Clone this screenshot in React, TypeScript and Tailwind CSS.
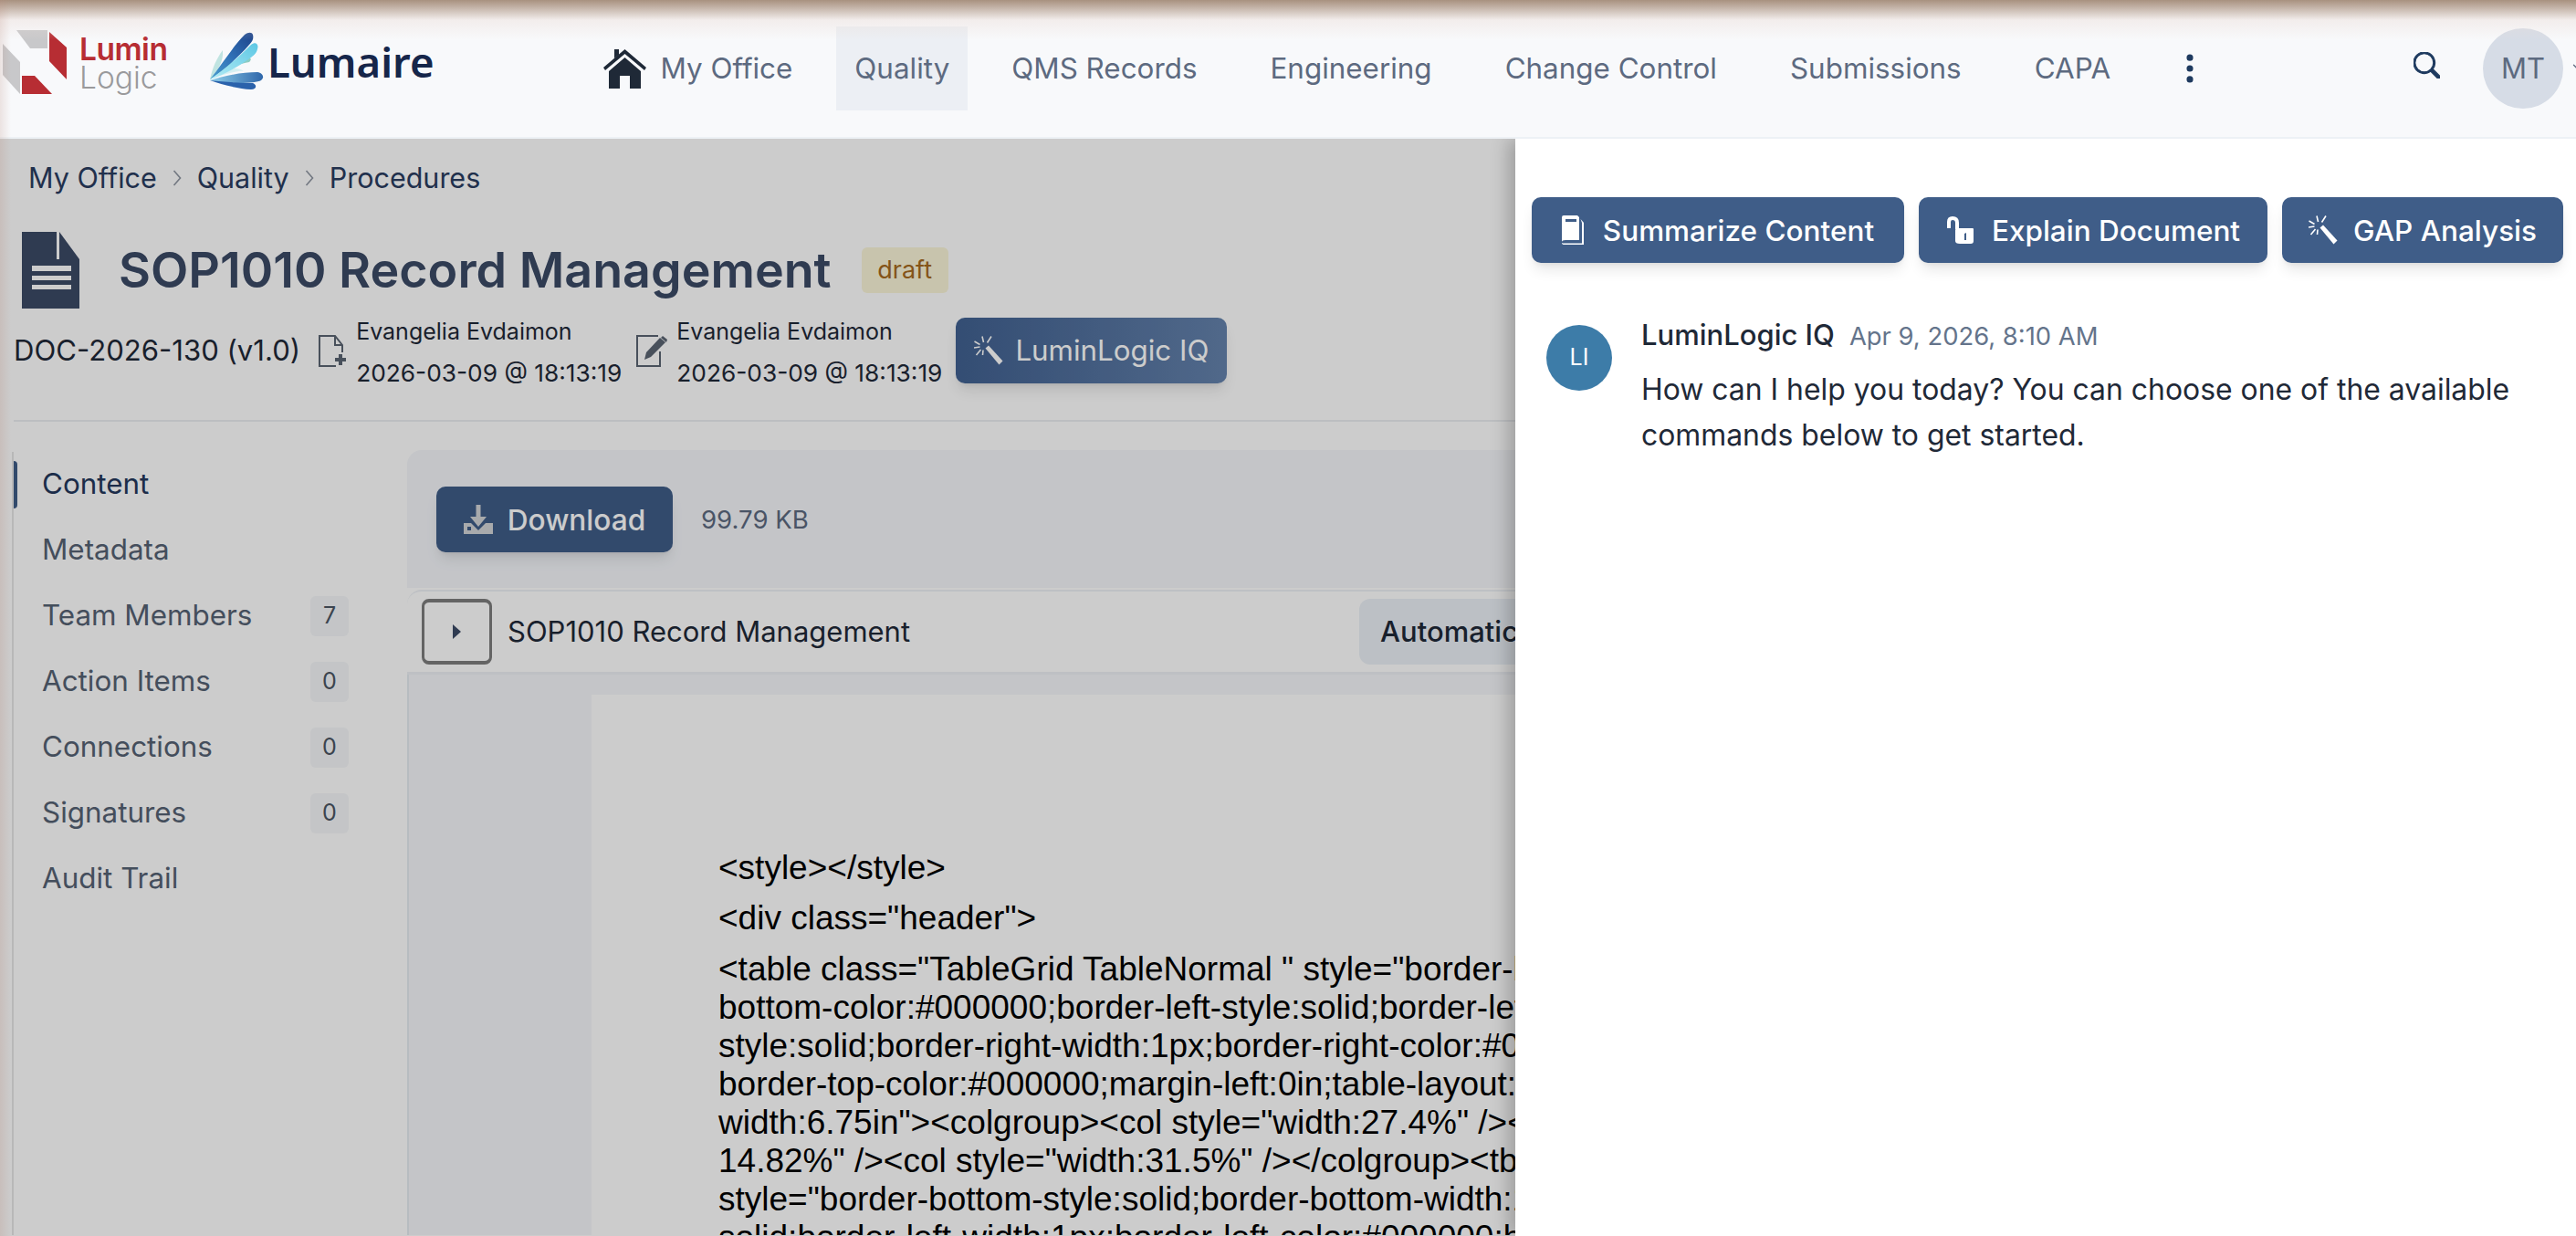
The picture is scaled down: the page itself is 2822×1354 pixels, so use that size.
import { BsSearch, BsThreeDotsVertical, BsChevronDown } from "react-icons/bs"

const Wand = ({className} : {className?: string}) => (
    <svg viewBox="0 0 32 32" className={className} fill="currentColor">
        <path d="M12.5 13.5 L16 10.5 L31.5 27.5 L27.5 31.5 Z" />
        <path d="M9 0.5 L10.5 7 M0.5 6 L6.5 9.5 M0 13 L6.5 12 M2.5 21 L7.5 15 M10 15.5 L9.5 21 M19 0.5 L14.5 7.5" stroke="currentColor" strokeWidth="1.6" fill="none" />
    </svg>
)

const DownloadIcon = () => (
    <svg viewBox="0 0 32 32" className="w-8 h-8 shrink-0 text-[#d3d5d8]" fill="currentColor">
        <path d="M13.5 0 H18.5 V13 H25 L16 24 L7 13 H13.5 Z" />
        <path fillRule="evenodd" d="M0 20 H8 L16 28 L24 20 H32 V32 H0 Z M4 24 V28 H8 V24 Z" />
    </svg>
)

const AddDocIcon = () => (
    <svg viewBox="0 0 31 35" className="w-[31px] h-[35px] shrink-0" fill="none" stroke="#5b6472" strokeWidth="2">
        <path d="M19 34 H1 V1 H18 L26 11 V19 M18 1 V11 H26" />
        <path d="M24 21 V33 M18 27 H30" strokeWidth="4" />
    </svg>
)

const EditDocIcon = () => (
    <svg viewBox="0 0 35 35" className="w-[35px] h-[35px] shrink-0" fill="none" stroke="#5b6472" strokeWidth="2">
        <path d="M24 1 H1 V34 H26 V18" />
        <path d="M9 27 L11 19 L26 3 L32 8 L16 24 Z" fill="#5b6472" stroke="none" />
        <path d="M29 1 L34 5 L33 8 L27 3 Z" fill="#5b6472" stroke="none" />
    </svg>
)

const Chevron = () => (
    <svg viewBox="0 0 10 18" className="w-[10px] h-[18px] shrink-0" fill="none" stroke="#8f96a2" strokeWidth="1.6">
        <path d="M1.5 1 L8.5 9 L1.5 17" />
    </svg>
)

const LuminMark = () => (
    <svg viewBox="0 0 72 72" className="w-[72px] h-[72px] shrink-0">
        <path d="M16 1 H50 V21 H31 Z" fill="#c8c8ca" />
        <path d="M52 3 L71 20 V55 L52 35 Z" fill="#b72d33" />
        <path d="M1 16 L20 36 V71 L1 50 Z" fill="#c8c8ca" />
        <path d="M22 51 H36 L55 71 H22 Z" fill="#b72d33" />
    </svg>
)

const LumaireMark = () => (
    <svg viewBox="0 0 60 64" className="w-[60px] h-[64px] shrink-0">
        <defs>
            <linearGradient id="top" x1="0" y1="1" x2="1" y2="0">
                <stop offset="0" stopColor="#4aa0d0" />
                <stop offset="0.5" stopColor="#2f6fb5" />
                <stop offset="1" stopColor="#1d4288" />
            </linearGradient>
            <linearGradient id="cyan" x1="0" y1="1" x2="1" y2="0">
                <stop offset="0" stopColor="#b5ecf5" />
                <stop offset="1" stopColor="#5cc7e4" />
            </linearGradient>
            <linearGradient id="low" x1="0" y1="0" x2="1" y2="0">
                <stop offset="0" stopColor="#8fd0ea" />
                <stop offset="1" stopColor="#2f67ab" />
            </linearGradient>
        </defs>
        <path d="M1 52 C4 38 9 28 15 20 C16 32 10 42 1 52 Z" fill="#a8dcd6" opacity="0.7" />
        <path d="M1 52 C14 42 28 36 44 33 C47 30 46 28 42 28 C26 30 10 40 1 52 Z" fill="#7fc6bd" opacity="0.9" />
        <path d="M1 52 C16 46 32 42 38 43 C30 36 12 42 1 52 Z" fill="#cdeef0" opacity="0.8" />
        <path d="M1 52 C14 36 26 16 39 3 C43 0 47 0 48 3 C49 7 48 10 44 14 C32 28 16 42 1 52 Z" fill="url(#top)" />
        <path d="M1 52 C16 42 32 28 46 14 C50 11 53 12 53.5 16 C53 22 50 25 46 28 C32 38 16 47 1 52 Z" fill="url(#cyan)" />
        <path d="M1 53 C20 47 38 44 53 44 C59 45 61 50 57 53 C50 57 20 57 1 53 Z" fill="url(#low)" />
        <path d="M1 53 C18 55 36 56 48 56 C53 58 52 63 46 63 C32 62 14 58 1 53 Z" fill="#2b62ab" />
    </svg>
)

const HomeIcon = () => (
    <svg viewBox="0 0 47 43" className="w-[47px] h-[43px] shrink-0" fill="#1f2937">
        <path d="M0 20 L23.5 0 L47 20 L45 23 L23.5 5 L2 23 Z" />
        <path d="M12 0 H17 V6 L12 10 Z" />
        <path fillRule="evenodd" d="M6 24 L23.5 9 L41 24 V43 H29 V29 H18 V43 H6 Z" />
    </svg>
)

const navItems = ["QMS Records", "Engineering", "Change Control", "Submissions", "CAPA"]

const Header = () => {
    return (
        <header className="relative z-30 h-[152px] flex items-center bg-[#f8f9fb] border-b-2 border-[#edf1f5]">
            <div className="ml-[2px] mb-[15px] flex items-center">
                <LuminMark />
                <div className="ml-[13px] w-[102px] flex flex-col mt-[5px]">
                    <span className="text-[33.5px] leading-[31px] font-semibold text-[#b72d33] tracking-[-0.5px]">Lumin</span>
                    <span className="text-[33.5px] leading-[31px] font-light text-[#9a9a9c]">Logic</span>
                </div>
            </div>
            <div className="ml-[40px] mb-[16px] flex items-center">
                <LumaireMark />
                <span className="ml-[4px] font-['Noto_Sans',sans-serif] text-[45.5px] leading-[50px] font-semibold text-[#16264a]">Lumaire</span>
            </div>
            <nav className="ml-[165px] flex items-center gap-10 text-[31.4px] text-[#5d6a80] whitespace-nowrap">
                <a className="h-[92px] px-5 flex items-center gap-[16px]"><HomeIcon /><span className="pt-[2px]">My Office</span></a>
                <a className="h-[92px] px-5 -mx-3 pt-[2px] flex items-center bg-[#eceff4]">Quality</a>
                {navItems.map((item) => (
                    <a key={item} className="h-[92px] px-5 pt-[2px] flex items-center">{item}</a>
                ))}
                <BsThreeDotsVertical className="w-[38px] h-[38px] text-[#1e3a5f] ml-[8px]" />
            </nav>
            <BsSearch className="ml-auto w-[29px] h-[29px] text-[#1e3a5f] stroke-[0.6] shrink-0 -mt-[8px]" />
            <div className="ml-[47px] w-[88px] h-[88px] shrink-0 rounded-full bg-[#d6dce6] flex items-center justify-center text-[31px] text-[#5d6a80]">MT</div>
            <BsChevronDown className="ml-[9px] -mr-[15px] w-5 h-5 shrink-0 text-[#5d6a80]" />
        </header>
    )
}

const sideItems: {name: string, count?: number, active?: boolean}[] = [
    {name: "Content", active: true},
    {name: "Metadata"},
    {name: "Team Members", count: 7},
    {name: "Action Items", count: 0},
    {name: "Connections", count: 0},
    {name: "Signatures", count: 0},
    {name: "Audit Trail"},
]

const Sidebar = () => {
    return (
        <aside className="w-[369px] shrink-0 mt-[2px] border-l-2 border-[#e7e7e7] self-stretch">
            {sideItems.map((item) => (
                <div key={item.name} className="h-[72px] flex items-center">
                    <div className={`w-1 h-[52px] rounded-r ${item.active ? "bg-[#3f5d88]" : "bg-transparent"}`} />
                    <span className={`ml-[27px] text-[31.4px] ${item.active ? "text-[#24385c]" : "text-[#566274]"}`}>{item.name}</span>
                    {item.count !== undefined && (
                        <span className="ml-auto h-[44px] w-[42px] rounded-md bg-[#f5f7f9] flex items-center justify-center text-[25px] text-[#4b5563]">{item.count}</span>
                    )}
                </div>
            ))}
        </aside>
    )
}

const docLines = [
    '<table class="TableGrid TableNormal " style="border-bottom-style:solid;border-bottom-width:1px;border-',
    "bottom-color:#000000;border-left-style:solid;border-left-width:1px;border-left-color:#000000;border-right-",
    "style:solid;border-right-width:1px;border-right-color:#000000;border-top-style:solid;border-top-width:1px;",
    "border-top-color:#000000;margin-left:0in;table-layout:fixed;width:6.75in;max-",
    'width:6.75in"><colgroup><col style="width:27.4%" /><col style="width:26.28%" /><col style="width:',
    '14.82%" /><col style="width:31.5%" /></colgroup><tbody><tr><td',
    'style="border-bottom-style:solid;border-bottom-width:1px;border-left-style:',
    "solid;border-left-width:1px;border-left-color:#000000;border-bottom-color:#000000",
]

const DocumentView = () => {
    return (
        <section className="flex-1 min-w-0">
            <div className="h-[151px] bg-[#f5f7fb] rounded-tl-2xl flex items-center pl-8 gap-[31px]">
                <button className="h-[72px] w-[259px] rounded-[10px] bg-[#3f5d88] shadow-lg flex items-center justify-center gap-[16px] text-[31.6px] font-medium text-white">
                    <DownloadIcon />
                    <span className="pt-[3px]">Download</span>
                </button>
                <span className="pt-[2px] text-[27.6px] text-[#5d6a80]">99.79 KB</span>
            </div>
            <div className="mt-[2px] h-[93px] bg-white border-t-2 border-b-[3px] border-[#eef1f5] rounded-tl-2xl flex items-center pl-4">
                <button className="w-[77px] h-[72px] shrink-0 rounded-lg border-x-[3px] border-y-4 border-[#7d7d7d] flex items-center justify-center">
                    <svg viewBox="0 0 9 16" className="w-[9px] h-4" fill="#3b4a66"><path d="M0 0 L9 8 L0 16 Z" /></svg>
                </button>
                <span className="ml-[17px] text-[31px] text-[#1f2937] whitespace-nowrap">SOP1010 Record Management</span>
                <div className="ml-[492px] h-[72px] w-[400px] shrink-0 rounded-l-xl bg-[#ebf1f7] flex items-center pl-[23px] text-[31px] font-medium text-[#1f2937]">Automatic</div>
            </div>
            <div className="h-[614px] bg-[#f5f7fb] border-l-2 border-[#e5ebf1] pl-[200px] pt-[22px] overflow-hidden">
                <div className="h-full bg-white pl-[139px] pt-[169px] font-['Liberation_Sans',sans-serif] text-[37px] leading-[42px] text-black whitespace-nowrap">
                    <p className="mb-[13px]">{"<style></style>"}</p>
                    <p className="mb-[14px]">{'<div class="header">'}</p>
                    {docLines.map((line) => (
                        <p key={line}>{line}</p>
                    ))}
                </div>
            </div>
        </section>
    )
}

const Main = () => {
    return (
        <main className="flex flex-col">
            <nav className="pt-[21px] pl-[31px] flex items-center gap-[17px] text-[30.5px] leading-[44px] text-[#2a3c5f]">
                <span>My Office</span>
                <Chevron />
                <span>Quality</span>
                <Chevron />
                <span>Procedures</span>
            </nav>
            <div className="mt-[37px] pl-6 flex items-center">
                <svg viewBox="0 0 63 84" className="w-[63px] h-[84px] shrink-0" fill="#3b4a66">
                    <path fillRule="evenodd" d="M0 0 H38 V30 H63 V84 H0 Z M11 37 V43 H54 V37 Z M11 48 V53 H54 V48 Z M11 58 V63 H54 V58 Z" />
                    <path d="M41 0 L63 30 H41 Z" />
                </svg>
                <h1 className="ml-[43px] text-[53.8px] leading-[72px] font-semibold text-[#3b4a66] whitespace-nowrap">SOP1010 Record Management</h1>
                <span className="ml-[33px] h-[50px] w-[95px] rounded-md bg-[#fbf6d9] flex items-center justify-center text-[27px] text-[#a56a1e]">draft</span>
            </div>
            <div className="mt-[10px] pl-[15px] flex items-center h-[72px]">
                <span className="text-[31.1px] text-[#1f2937] whitespace-nowrap">DOC-2026-130 (v1.0)</span>
                <div className="ml-[20px]"><AddDocIcon /></div>
                <div className="ml-[10px] pt-[3px] leading-[45px] text-[#1f2937] whitespace-nowrap">
                    <p className="text-[25px]">Evangelia Evdaimon</p>
                    <p className="text-[26.3px]">2026-03-09 @ 18:13:19</p>
                </div>
                <div className="ml-[16px]"><EditDocIcon /></div>
                <div className="ml-[9px] pt-[3px] leading-[45px] text-[#1f2937] whitespace-nowrap">
                    <p className="text-[25px]">Evangelia Evdaimon</p>
                    <p className="text-[26.3px]">2026-03-09 @ 18:13:19</p>
                </div>
                <button className="ml-[15px] h-[72px] w-[297px] rounded-[10px] bg-linear-to-r from-[#416191] to-[#6583ad] shadow-lg flex items-center justify-center gap-[13px] text-[31.3px] text-white">
                    <Wand className="w-8 h-8" />
                    <span>LuminLogic IQ</span>
                </button>
            </div>
            <div className="mt-[40px] ml-[15px] border-t-2 border-[#eceef2]" />
            <div className="mt-[31px] pl-[13px] flex gap-[64px]">
                <Sidebar />
                <DocumentView />
            </div>
        </main>
    )
}

const Drawer = () => {
    return (
        <div className="absolute z-20 right-0 top-[152px] bottom-0 w-[1162px] bg-white shadow-[-8px_0_18px_rgba(0,0,0,0.22)]">
            <div className="pt-16 pl-[18px] flex gap-4">
                <button className="h-[72px] w-[408px] rounded-[10px] bg-[#3f5d88] shadow-lg flex items-center justify-center gap-[21px] text-[31.5px] font-medium text-white">
                    <svg viewBox="0 0 24 32" className="w-6 h-8 shrink-0" fill="currentColor">
                        <path fillRule="evenodd" d="M2 0 H17 L19 2 V27 H4 Q0 27 0 29 V2 Q0 0 2 0 Z M4 4 V7 H16 V4 Z" />
                        <path d="M20.5 4 L24 8 V32 H3 Q0 32 0 30 Q1 30.5 3 30.5 H22 V8 Z" />
                    </svg>
                    <span className="pt-[1px]">Summarize Content</span>
                </button>
                <button className="h-[72px] w-[382px] rounded-[10px] bg-[#3f5d88] shadow-lg flex items-center justify-center gap-[20px] text-[31.5px] font-medium text-white">
                    <svg viewBox="0 0 30 30" className="w-[30px] h-[30px] shrink-0" fill="currentColor">
                        <path d="M3 13 V6 Q3 2 7 2 Q12 2 12 7 V14" fill="none" stroke="currentColor" strokeWidth="4" />
                        <path fillRule="evenodd" d="M12 13 H29 Q30 13 30 14 V27 Q30 30 27 30 H15 Q10 30 10 27 V15 Q10 13 12 13 Z M20 19 L22 18 V26 H20 Z" />
                    </svg>
                    <span className="pt-[1px]">Explain Document</span>
                </button>
                <button className="h-[72px] w-[308px] rounded-[10px] bg-[#3f5d88] shadow-lg flex items-center justify-center gap-[17px] text-[31.5px] font-medium text-white">
                    <Wand className="w-8 h-8" />
                    <span className="pt-[1px]">GAP Analysis</span>
                </button>
            </div>
            <div className="mt-[54px] pl-[34px] flex gap-[32px]">
                <div className="mt-[14px] w-[72px] h-[72px] shrink-0 rounded-full bg-[#3d7ca8] flex items-center justify-center text-[25px] text-white">LI</div>
                <div className="w-[990px]">
                    <div className="flex items-baseline gap-[16px] h-[60px]">
                        <span className="text-[31px] leading-[50px] font-medium text-[#1f2937]">LuminLogic IQ</span>
                        <span className="text-[27.4px] text-[#64748b]">Apr 9, 2026, 8:10 AM</span>
                    </div>
                    <p className="text-[31.9px] leading-[50.4px] text-[#1f2937]">How can I help you today? You can choose one of the available commands below to get started.</p>
                </div>
            </div>
        </div>
    )
}

export default function App() {
    return (
        <div className="relative w-full h-[1354px] overflow-hidden bg-white font-[Inter,sans-serif]">
            <Header />
            <Main />
            <div className="absolute z-10 inset-x-0 top-[152px] bottom-0 bg-black/20" />
            <Drawer />
            <div className="absolute z-40 inset-x-0 top-0 h-[44px] bg-linear-to-b from-[#a8917f] via-[#eadcd6]/40 to-transparent pointer-events-none" />
            <div className="absolute z-40 left-0 inset-y-0 w-3 bg-linear-to-r from-[#b9897a]/20 to-transparent pointer-events-none" />
        </div>
    )
}
